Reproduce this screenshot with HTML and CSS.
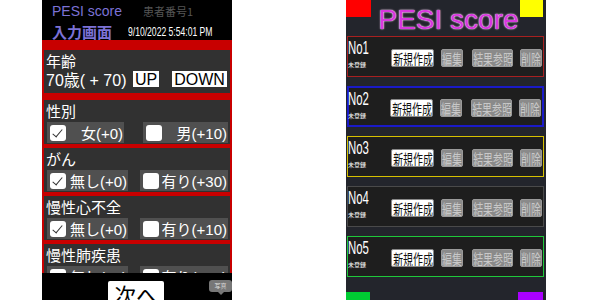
FILE: index.html
```html
<!DOCTYPE html>
<html>
    <head>
        <meta charset="UTF-8">
        <meta name="viewport" content="width = device-width, initial-scale = 1.0">
        <title> PESI score </title>
        <link rel="stylesheet" href="styles.css">
    </head>

    <body>
        <div class="stage">

  <!--   input screen   -->
  <div class="phone-left">
    <div class="lp-head">
      <div class="head-row">
        <span class="app-name">PESI score</span>
        <span class="patient">患者番号1</span>
      </div>
      <div class="head-row">
        <span class="screen-name">入力画面</span>
        <span class="date"><span class="narrow">9/10/2022 5:54:01 PM</span></span>
      </div>
    </div>

    <div class="lp-body">
      <div class="sec age">
        <div class="sec-title">年齢</div>
        <div class="age-row">
          <span class="age-val">70歳( + 70)</span>
          <span class="age-btn up">UP</span>
          <span class="age-btn">DOWN</span>
        </div>
      </div>

      <div class="sec">
        <div class="sec-title">性別</div>
        <div class="opts">
          <div class="opt w77"><span class="box checked"></span><span>女(+0)</span></div>
          <div class="opt w85"><span class="box"></span><span>男(+10)</span></div>
        </div>
      </div>

      <div class="sec">
        <div class="sec-title">がん</div>
        <div class="opts">
          <div class="opt w81"><span class="box checked"></span><span>無し(+0)</span></div>
          <div class="opt w88"><span class="box"></span><span>有り(+30)</span></div>
        </div>
      </div>

      <div class="sec">
        <div class="sec-title">慢性心不全</div>
        <div class="opts">
          <div class="opt w81"><span class="box checked"></span><span>無し(+0)</span></div>
          <div class="opt w88"><span class="box"></span><span>有り(+10)</span></div>
        </div>
      </div>

      <div class="sec">
        <div class="sec-title">慢性肺疾患</div>
        <div class="opts">
          <div class="opt w81"><span class="box checked"></span><span>無し(+0)</span></div>
          <div class="opt w88"><span class="box"></span><span>有り(+10)</span></div>
        </div>
      </div>
    </div>

    <div class="lp-foot">
      <button class="next-btn">次へ</button>
      <div class="tip">写真</div>
    </div>
  </div>

  <!--   patient list screen   -->
  <div class="phone-right">
    <div class="rp-head">
      <span class="sq red"></span>
      <span class="big-title">PESI score</span>
      <span class="sq yellow"></span>
    </div>

    <div class="cards">
      <div class="card c-red">
        <div class="card-id"><span class="no">No1</span><span class="state">未登録</span></div>
        <div class="card-btns">
          <span class="cbtn on w43"><span class="narrow">新規作成</span></span>
          <span class="cbtn w22"><span class="narrow">編集</span></span>
          <span class="cbtn w41"><span class="narrow">結果参照</span></span>
          <span class="cbtn w22"><span class="narrow">削除</span></span>
        </div>
      </div>
      <div class="card c-blue">
        <div class="card-id"><span class="no">No2</span><span class="state">未登録</span></div>
        <div class="card-btns">
          <span class="cbtn on w43"><span class="narrow">新規作成</span></span>
          <span class="cbtn w22"><span class="narrow">編集</span></span>
          <span class="cbtn w41"><span class="narrow">結果参照</span></span>
          <span class="cbtn w22"><span class="narrow">削除</span></span>
        </div>
      </div>
      <div class="card c-yellow">
        <div class="card-id"><span class="no">No3</span><span class="state">未登録</span></div>
        <div class="card-btns">
          <span class="cbtn on w43"><span class="narrow">新規作成</span></span>
          <span class="cbtn w22"><span class="narrow">編集</span></span>
          <span class="cbtn w41"><span class="narrow">結果参照</span></span>
          <span class="cbtn w22"><span class="narrow">削除</span></span>
        </div>
      </div>
      <div class="card c-gray">
        <div class="card-id"><span class="no">No4</span><span class="state">未登録</span></div>
        <div class="card-btns">
          <span class="cbtn on w43"><span class="narrow">新規作成</span></span>
          <span class="cbtn w22"><span class="narrow">編集</span></span>
          <span class="cbtn w41"><span class="narrow">結果参照</span></span>
          <span class="cbtn w22"><span class="narrow">削除</span></span>
        </div>
      </div>
      <div class="card c-green">
        <div class="card-id"><span class="no">No5</span><span class="state">未登録</span></div>
        <div class="card-btns">
          <span class="cbtn on w43"><span class="narrow">新規作成</span></span>
          <span class="cbtn w22"><span class="narrow">編集</span></span>
          <span class="cbtn w41"><span class="narrow">結果参照</span></span>
          <span class="cbtn w22"><span class="narrow">削除</span></span>
        </div>
      </div>
    </div>

    <div class="rp-foot">
      <span class="sq green"></span>
      <span class="sq purple"></span>
    </div>
  </div>

</div>
    </body>
</html>
```

FILE: styles.css
```css
body {
  margin: 0;
  background: #fff;
  font-family: "Liberation Sans", "Noto Sans CJK JP", sans-serif;
}

.stage {
  height: 300px;
  overflow: hidden;
  display: flex;
  padding-left: 42px;
  gap: 114px;
}

/* ---------- left phone ---------- */

.phone-left {
  width: 190px;
  height: 300px;
  background: #000;
  display: flex;
  flex-direction: column;
  overflow: hidden;
  flex-shrink: 0;
}

.lp-head {
  height: 40px;
  box-sizing: border-box;
  padding: 1px 0 0 10px;
  flex-shrink: 0;
  overflow: hidden;
}

.head-row {
  display: flex;
  align-items: center;
  height: 20px;
  white-space: nowrap;
}

.app-name {
  width: 91px;
  flex-shrink: 0;
  color: #7c72d6;
  font-size: 14px;
}

.patient {
  color: #555;
  font-size: 11px;
  font-family: "Noto Sans CJK JP", sans-serif;
}

.screen-name {
  width: 76px;
  flex-shrink: 0;
  color: #7c72d6;
  font-size: 15px;
  font-weight: bold;
  font-family: "Noto Sans CJK JP", sans-serif;
}

.date {
  color: #fff;
  font-size: 13px;
  min-width: 0;
}

.date .narrow {
  display: inline-block;
  transform: scaleX(0.66);
  transform-origin: left center;
}

.lp-body {
  flex: 1;
  overflow: hidden;
  background: #c80000;
  padding: 10px 2px 0;
}

.sec {
  background: #313131;
  height: 44px;
  margin-bottom: 4px;
  color: #fff;
}

.sec.age {
  height: 43px;
  margin-bottom: 7px;
}

.sec-title {
  height: 22px;
  line-height: 22px;
  padding-left: 2px;
  font-size: 15px;
  font-family: "Noto Sans CJK JP", sans-serif;
}

.age .sec-title {
  height: 20px;
  line-height: 22px;
}

.age-row {
  display: flex;
  align-items: center;
  height: 17px;
  padding-left: 2px;
  font-size: 16px;
}

.age-val {
  width: 87px;
  white-space: nowrap;
}

.age-btn {
  background: #fff;
  color: #000;
  height: 16px;
  line-height: 17px;
  padding: 0 2px;
  font-size: 16px;
}

.age-btn.up {
  margin-right: 13px;
}

.opts {
  display: flex;
  justify-content: space-between;
  padding: 0 2px 0 3px;
}

.opt {
  height: 21px;
  background: #505050;
  display: flex;
  align-items: center;
  justify-content: space-between;
  padding: 0 1px 0 3px;
  box-sizing: border-box;
  font-size: 15px;
}

.w77 { width: 77px; }
.w81 { width: 81px; }
.w85 { width: 85px; }
.w88 { width: 88px; }

.box {
  width: 16px;
  height: 16px;
  background: #fff;
  border-radius: 3px;
  position: relative;
}

.box.checked::after {
  content: "";
  position: absolute;
  left: 5px;
  top: 2px;
  width: 4px;
  height: 9px;
  border: solid #333;
  border-width: 0 1.5px 1.5px 0;
  transform: rotate(40deg);
}

.lp-foot {
  height: 27px;
  flex-shrink: 0;
  background: #000;
  position: relative;
  display: flex;
  justify-content: center;
}

.next-btn {
  margin: 8px 0 0 -2px;
  width: 56px;
  height: 26px;
  border: 0;
  border-radius: 2px;
  background: #fff;
  color: #000;
  padding: 0;
  font-size: 22px;
  line-height: 26px;
  font-family: "Noto Sans CJK JP", sans-serif;
}

.tip {
  position: absolute;
  right: 0;
  top: 7px;
  width: 23px;
  height: 12px;
  background: #777;
  border-radius: 3px;
  color: #ddd;
  font-size: 6px;
  line-height: 12px;
  text-align: center;
}

.tip::after {
  content: "";
  position: absolute;
  left: 9px;
  top: 12px;
  border: 3px solid transparent;
  border-top-color: #777;
}

/* ---------- right phone ---------- */

.phone-right {
  width: 200px;
  height: 300px;
  background: #23252c;
  display: flex;
  flex-direction: column;
  flex-shrink: 0;
}

.rp-head {
  height: 36px;
  display: flex;
  align-items: flex-start;
  padding-right: 3px;
  flex-shrink: 0;
}

.sq {
  display: block;
  height: 17px;
}

.sq.red { width: 25px; background: #f00; }
.sq.yellow { width: 23px; background: #ff0; }
.sq.green { width: 24px; height: 8px; background: #0c3; }
.sq.purple { width: 25px; height: 8px; background: #a0f; }

.big-title {
  flex: 1;
  text-align: center;
  padding: 3px 0 0 6px;
  line-height: 34px;
  font-size: 28px;
  color: #d838de;
  text-shadow: 0 0 1px #fff, 0 0 2px #f8c8f8;
}

.cards {
  display: flex;
  flex-direction: column;
  gap: 9px;
  padding: 0 2px 0 1px;
}

.card {
  height: 41px;
  box-sizing: border-box;
  border: 1px solid #555;
  background: #1e1e1e;
  display: flex;
}

.c-red { border-color: #a82020; }
.c-blue { border: 2px solid #1a1ac8; }
.c-yellow { border-color: #d6c000; }
.c-gray { border-color: #4a4a4a; }
.c-green { border-color: #1fc83a; }

.card-id {
  width: 43px;
  display: flex;
  flex-direction: column;
  color: #fff;
}

.no {
  display: inline-block;
  font-size: 19px;
  line-height: 18px;
  margin-top: 2px;
  transform: scaleX(0.6);
  transform-origin: left center;
}

.state {
  font-size: 6px;
  margin-top: 3px;
  font-family: "Noto Sans CJK JP", sans-serif;
}

.c-blue .card-id { margin-left: -1px; }
.c-blue .card-btns { margin-top: 11px; margin-left: -1px; }

.card-btns {
  display: flex;
  margin-top: 12px;
  gap: 7px;
}

.cbtn {
  height: 18px;
  box-sizing: border-box;
  border: 1px solid #9a9a9a;
  border-radius: 2px;
  background: #8a8a8a;
  color: #c8c8c8;
  display: flex;
  justify-content: center;
  align-items: center;
  font-size: 15px;
  font-family: "Noto Sans CJK JP", sans-serif;
  overflow: hidden;
}

.cbtn.on {
  background: #fff;
  color: #111;
  border-color: #888;
}

.cbtn .narrow {
  display: inline-block;
  transform: scaleX(0.66);
  white-space: nowrap;
}

.w43 { width: 43px; }
.w22 { width: 22px; }
.w41 { width: 41px; margin-left: 2px; }

.rp-foot {
  margin-top: auto;
  display: flex;
  justify-content: space-between;
  padding-right: 3px;
}
```
